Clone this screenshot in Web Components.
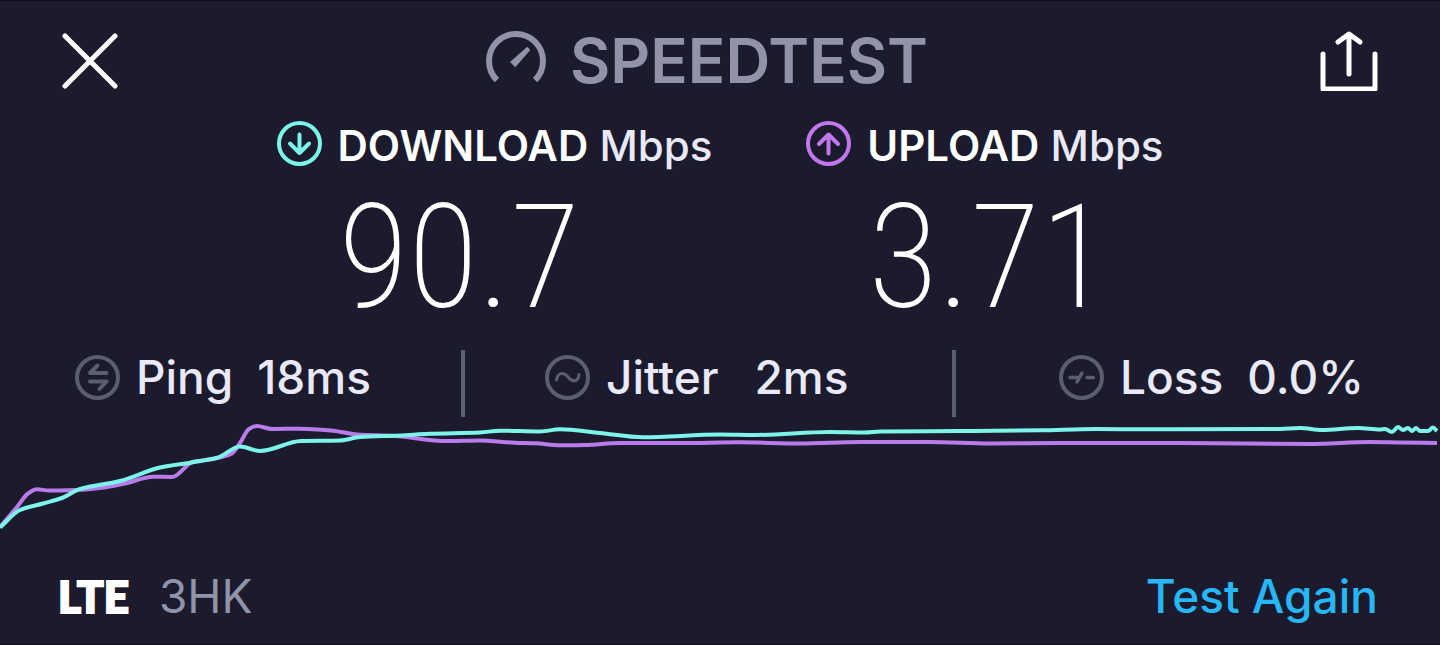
<!DOCTYPE html>
<html lang="en">
<head>
<meta charset="utf-8">
<meta name="viewport" content="width=device-width, initial-scale=1">
<title>Speedtest result</title>
<style>
  body { margin: 0; background: #1b1b2d; color: #e9e9f9; font-family: Inter, "Liberation Sans", sans-serif; }
</style>
</head>
<body>
<speed-result></speed-result>

<script>
const ICONS = {
  close: ['56 60', '<path d="M3 5 53 55M53 5 3 55" stroke-width="5"/>'],
  share: ['58 60', '<path d="M3 23V58H55V23" stroke-width="5"/><path d="M29 43V3M18 11 29 3 40 11" stroke-width="5"/>'],
  gauge: ['60 60', '<path d="M10.9 49.1A27 27 0 1 1 49.1 49.1" stroke-width="6" stroke-linecap="butt"/><path d="M24 31 41.3 15.7 44.3 19 29.3 36.3Z" fill="currentColor" stroke="none"/>'],
  down: ['45 45', '<circle cx="22.5" cy="22.5" r="20.5"/><path d="M22.5 13.5V32M13 22.5 22.5 32 32 22.5"/>'],
  up: ['45 45', '<circle cx="22.5" cy="22.5" r="20.5"/><path d="M22.5 32.5V14M13 23 22.5 13.5 32 23"/>'],
  ping: ['45 45', '<circle cx="22.5" cy="22.5" r="20.5"/><path d="M31.5 18H15L22.5 10.5M15 26.5H31.5L24.5 34"/>'],
  jitter: ['45 45', '<circle cx="22.5" cy="22.5" r="20.5"/><path d="M11.5 25C13 17 19 17 23 22S33 28 34 19.5" stroke-width="3"/>'],
  loss: ['45 45', '<circle cx="22.5" cy="22.5" r="20.5"/><path d="M11 22.5H20M18 27 23 18M28 22.5H34.5" stroke-width="3.5"/>']
};

class Base extends HTMLElement {
  connectedCallback() {
    if (this.shadowRoot) return;
    this.attachShadow({ mode: 'open' }).innerHTML = this.render();
  }
}

customElements.define('line-icon', class extends Base {
  render() {
    const [size, body] = ICONS[this.getAttribute('name')];
    const [w, h] = size.split(' ');
    return `<style>:host{display:block;flex:none}svg{display:block}</style>
      <svg width="${w}" height="${h}" viewBox="0 0 ${size}" fill="none" stroke="currentColor" stroke-width="4"
        stroke-linecap="round" stroke-linejoin="round" aria-hidden="true">${body}</svg>`;
  }
});

customElements.define('icon-button', class extends Base {
  render() {
    return `<style>:host{display:block}
      button{display:block;margin:0;padding:0;border:0;background:none;color:#fff;cursor:pointer}</style>
      <button type="button" aria-label="${this.getAttribute('label')}"><line-icon name="${this.getAttribute('icon')}"></line-icon></button>`;
  }
});

customElements.define('top-bar', class extends Base {
  render() {
    return `<style>
      :host{display:block}
      header{display:flex;justify-content:space-between;align-items:center;height:60px;padding:0 62px}
      h1{display:flex;align-items:center;gap:24px;margin:0;padding-right:24px;color:#9193a8;font-size:62px;line-height:60px;font-weight:600}
      </style>
      <header>
        <icon-button icon="close" label="Close"></icon-button>
        <h1><line-icon name="gauge"></line-icon><span>SPEEDTEST</span></h1>
        <icon-button icon="share" label="Share"></icon-button>
      </header>`;
  }
});

customElements.define('speed-reading', class extends Base {
  render() {
    return `<style>
      :host{display:block}
      h2{display:flex;align-items:center;gap:16px;height:45px;margin:0;font-size:42px;line-height:44px;font-weight:500}
      h2 span{padding-top:4px}
      line-icon{color:var(--accent)}
      b{font-weight:600;color:#fff}
      p{margin:0;padding-left:62px;color:#fff;font-family:"Roboto Condensed",Roboto,sans-serif;font-weight:200;font-size:144px;line-height:184px}
      </style>
      <h2><line-icon name="${this.getAttribute('icon')}"></line-icon><span><b>${this.getAttribute('label')}</b> Mbps</span></h2>
      <p><slot></slot></p>`;
  }
});

customElements.define('stat-item', class extends Base {
  render() {
    return `<style>
      :host{display:flex;align-items:center;gap:16px;box-sizing:border-box;padding:0 0 12px;font-size:46px;line-height:55px;font-weight:500;white-space:nowrap}
      line-icon{color:#5d5d70}
      .pair{display:flex;gap:var(--pair-gap,24px)}
      </style>
      <line-icon name="${this.getAttribute('icon')}"></line-icon>
      <span class="pair"><span>${this.getAttribute('label')}</span><span><slot></slot></span></span>`;
  }
});

customElements.define('stat-row', class extends Base {
  render() {
    return `<style>
      :host{display:grid;grid-template-columns:461fr 491fr 488fr}
      ::slotted(*){padding-left:75px}
      ::slotted(:nth-child(n+2)){border-left:4px solid #5f5f73;padding-left:80px}
      ::slotted(:nth-child(3)){padding-left:103px}
      </style><slot></slot>`;
  }
});

/* Draws each series as a smooth curve through its sample points. */
customElements.define('throughput-chart', class extends Base {
  curve(p) {
    const slope = p.map((q, i) => {
      const a = p[i - 1], c = p[i + 1];
      if (!a || !c) { const [u, v] = a ? [a, q] : [q, c]; return (v[1] - u[1]) / (v[0] - u[0]); }
      const s = (q[1] - a[1]) / (q[0] - a[0]), t = (c[1] - q[1]) / (c[0] - q[0]);
      return s * t <= 0 ? 0 : 2 * s * t / (s + t);
    });
    let d = `M${p[0]}`;
    for (let i = 1; i < p.length; i++) {
      const [x0, y0] = p[i - 1], [x1, y1] = p[i], h = (x1 - x0) / 3;
      d += `C${x0 + h} ${y0 + h * slope[i - 1]} ${x1 - h} ${y1 - h * slope[i]} ${x1} ${y1}`;
    }
    return d;
  }
  render() {
    const up = [[0,527],[17,507],[28,493.5],[37,489.2],[49,490.5],[76,490],[100,488],[125,483.5],[153,476.7],[172,477],[193,461.7],[213,459],[231,454],[240,443],[249,429],[257,426],[272,429],[300,428.7],[333,430.7],[357,434.5],[395,436],[447,441],[480,440.5],[515,442.7],[535,443.3],[560,445.3],[585,445],[620,443],[680,443],[740,442.3],[800,443.5],[860,442],[930,442],[990,443.5],[1060,443],[1180,443],[1310,444],[1370,442],[1400,442.5],[1437,443]];
    const down = [[0,527.5],[20,510],[43,503.5],[62,498],[80,489],[120,481],[160,467.5],[193,462.3],[218,457.5],[240,446.5],[260,451],[301,441],[340,440.5],[360,437],[400,435.5],[430,433.7],[480,432.5],[500,430.7],[540,431.5],[560,429.3],[600,433],[643,437.3],[720,434.5],[755,435],[830,432],[865,432.5],[880,431.5],[960,431],[1040,430.3],[1095,429],[1150,429.3],[1280,429],[1300,428],[1322,430],[1358,428],[1380,429.5],[1385,429],[1392,432],[1398,427],[1403,430],[1408,428],[1412,431],[1416,428],[1420,431],[1428,431],[1433,427.5],[1437,431]];
    return `<style>:host{display:block}svg{display:block;width:100%;height:120px}</style>
      <svg viewBox="0 417 1440 120" preserveAspectRatio="none" fill="none" stroke-width="4" role="img" aria-label="Throughput over time">
        <path d="${this.curve(up)}" stroke="#b97bea"/>
        <path d="${this.curve(down)}" stroke="#7cf4ea"/>
      </svg>`;
  }
});

customElements.define('bottom-bar', class extends Base {
  render() {
    return `<style>
      :host{display:block}
      footer{display:flex;align-items:center;gap:30px;padding:0 62px 20px 58px;font-size:46px;line-height:56px}
      strong{color:#fff;font-family:Lato,sans-serif;font-weight:900;font-size:44px;-webkit-text-stroke:2px #fff;stroke-linejoin:round}
      .carrier{color:#9193a8;font-weight:400}
      button{margin:0 0 0 auto;padding:0;border:0;background:none;color:#27b6f6;font:inherit;font-weight:500;cursor:pointer}
      </style>
      <footer><strong>LTE</strong><span class="carrier">3HK</span><button type="button">Test Again</button></footer>`;
  }
});

customElements.define('speed-result', class extends Base {
  render() {
    return `<style>
      :host{display:flex;flex-direction:column;box-sizing:border-box;min-height:100vh;border:solid #0e0e1e;border-width:1px 0;padding-top:30px}
      .readings{display:flex;justify-content:center;gap:94px;padding-top:30px}
      .down{--accent:#7cf4ea}
      .up{--accent:#c277ef}
      .jitter{--pair-gap:36px}
      bottom-bar{margin-top:auto}
      </style>
      <top-bar></top-bar>
      <main>
        <div class="readings">
          <speed-reading class="down" icon="down" label="DOWNLOAD">90.7</speed-reading>
          <speed-reading class="up" icon="up" label="UPLOAD">3.71</speed-reading>
        </div>
        <stat-row>
          <stat-item icon="ping" label="Ping">18ms</stat-item>
          <stat-item class="jitter" icon="jitter" label="Jitter">2ms</stat-item>
          <stat-item icon="loss" label="Loss">0.0%</stat-item>
        </stat-row>
        <throughput-chart></throughput-chart>
      </main>
      <bottom-bar></bottom-bar>`;
  }
});
</script>
</body>
</html>
